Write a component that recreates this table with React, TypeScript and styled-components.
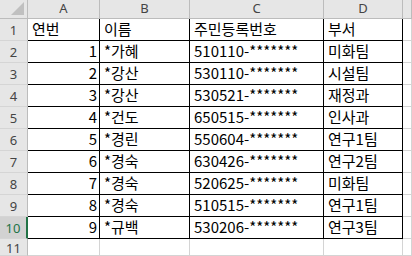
import React from "react";
import styled, { createGlobalStyle } from "styled-components";

const Global = createGlobalStyle`
  html, body { margin: 0; padding: 0; background: #ffffff; }
  body { font-family: "Noto Sans CJK KR", "Noto Sans", sans-serif; }
`;

const GRID = "#d4d4d4";
const HEAD_LINE = "#bcbcbc";

const Sheet = styled.div`
  display: grid;
  grid-template-columns: 28px 72px 90px 134px 79px 1fr;
  grid-template-rows: 19px repeat(10, 22px) 1fr;
  width: 412px;
  height: 256px;
  overflow: hidden;
  background: #fff;
`;

const Corner = styled.div`
  position: relative;
  background: #e6e6e6;
  border-right: 1px solid ${HEAD_LINE};
  border-bottom: 1px solid ${HEAD_LINE};
  &::after {
    content: "";
    position: absolute;
    right: 3px;
    bottom: 3px;
    width: 0;
    height: 0;
    border-left: 13px solid transparent;
    border-bottom: 13px solid #c0c0c0;
  }
`;

const ColHeader = styled.div`
  display: flex;
  align-items: center;
  justify-content: center;
  background: #e6e6e6;
  border-right: 1px solid ${HEAD_LINE};
  border-bottom: 1px solid ${HEAD_LINE};
  font-family: "Noto Sans", "Noto Sans CJK KR", sans-serif;
  font-size: 13px;
  color: #444;
  line-height: 1;
  padding-bottom: 1px;
`;

const RowHeader = styled.div<{ $active?: boolean }>`
  display: flex;
  align-items: center;
  justify-content: center;
  background: ${(p) => (p.$active ? "#d2d2d2" : "#e6e6e6")};
  border-right: ${(p) => (p.$active ? "2px solid #217346" : `1px solid ${HEAD_LINE}`)};
  border-bottom: 1px solid #d5d5d5;
  font-family: "Noto Sans", "Noto Sans CJK KR", sans-serif;
  font-size: 13px;
  color: ${(p) => (p.$active ? "#217346" : "#444")};
  line-height: 1;
  padding-top: 2px;
`;

const Cell = styled.div<{ $right?: boolean; $boxed?: boolean }>`
  display: flex;
  align-items: flex-end;
  justify-content: ${(p) => (p.$right ? "flex-end" : "flex-start")};
  padding: 0 ${(p) => (p.$right ? "2px" : "0")} 2px ${(p) => (p.$right ? "0" : "4px")};
  border-right: 1px solid ${(p) => (p.$boxed ? "#000" : GRID)};
  border-bottom: 1px solid ${(p) => (p.$boxed ? "#000" : GRID)};
  font-size: 15px;
  line-height: 18px;
  color: #000;
  white-space: nowrap;
  overflow: hidden;
`;

const rows = [
  ["1", "*가혜", "510110-*******", "미화팀"],
  ["2", "*강산", "530110-*******", "시설팀"],
  ["3", "*강산", "530521-*******", "재정과"],
  ["4", "*건도", "650515-*******", "인사과"],
  ["5", "*경린", "550604-*******", "연구1팀"],
  ["6", "*경숙", "630426-*******", "연구2팀"],
  ["7", "*경숙", "520625-*******", "미화팀"],
  ["8", "*경숙", "510515-*******", "연구1팀"],
  ["9", "*규백", "530206-*******", "연구3팀"],
];

export default function App() {
  return (
    <>
      <Global />
      <Sheet>
        <Corner />
        <ColHeader>A</ColHeader>
        <ColHeader>B</ColHeader>
        <ColHeader>C</ColHeader>
        <ColHeader>D</ColHeader>
        <ColHeader />

        <RowHeader>1</RowHeader>
        <Cell $boxed>연번</Cell>
        <Cell $boxed>이름</Cell>
        <Cell $boxed>주민등록번호</Cell>
        <Cell $boxed>부서</Cell>
        <Cell />

        {rows.map((r, i) => (
          <React.Fragment key={i}>
            <RowHeader $active={i === 8}>{i + 2}</RowHeader>
            <Cell $boxed $right>{r[0]}</Cell>
            <Cell $boxed>{r[1]}</Cell>
            <Cell $boxed>{r[2]}</Cell>
            <Cell $boxed>{r[3]}</Cell>
            <Cell />
          </React.Fragment>
        ))}

        <RowHeader>11</RowHeader>
        <Cell />
        <Cell />
        <Cell />
        <Cell />
        <Cell />
      </Sheet>
    </>
  );
}
